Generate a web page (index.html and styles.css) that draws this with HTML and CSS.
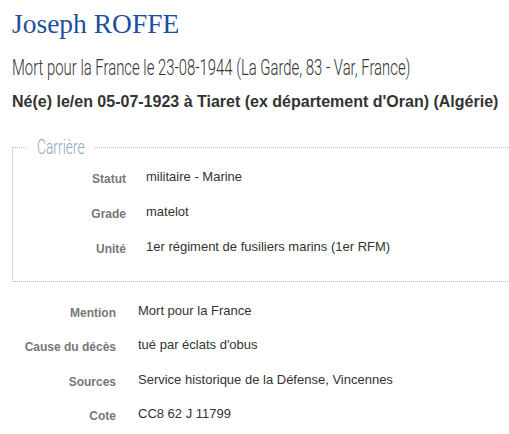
FILE: index.html
```html
<!DOCTYPE html>
<html lang="fr">
<head>
<meta charset="utf-8">
<link rel="stylesheet" href="styles.css">
</head>
<body>
<div class="page">
  <h1 class="name">Joseph ROFFE</h1>
  <p class="death"><span class="narrow death-text">Mort pour la France le 23-08-1944 (La Garde, 83 - Var, France)</span></p>
  <p class="birth">Né(e) le/en 05-07-1923 à Tiaret (ex département d'Oran) (Algérie)</p>
  <fieldset class="box">
    <legend class="legend"><span class="narrow legend-text">Carrière</span></legend>
    <dl class="rows inner">
      <div class="row"><dt>Statut</dt><dd>militaire - Marine</dd></div>
      <div class="row"><dt>Grade</dt><dd>matelot</dd></div>
      <div class="row"><dt>Unité</dt><dd>1er régiment de fusiliers marins (1er RFM)</dd></div>
    </dl>
  </fieldset>
  <dl class="rows outer">
    <div class="row"><dt>Mention</dt><dd>Mort pour la France</dd></div>
    <div class="row"><dt>Cause du décès</dt><dd>tué par éclats d'obus</dd></div>
    <div class="row"><dt>Sources</dt><dd>Service historique de la Défense, Vincennes</dd></div>
    <div class="row"><dt>Cote</dt><dd>CC8 62 J 11799</dd></div>
  </dl>
</div>
</body>
</html>
```

FILE: styles.css
```css
html, body { margin: 0; padding: 0; background: #fff; }
body { font-family: "Liberation Sans", Arial, sans-serif; color: #333; overflow: hidden; }
.page { padding: 0 0 0 12px; width: 560px; }
.name {
  font-family: "Liberation Serif", "DejaVu Serif", serif;
  font-weight: normal;
  font-size: 27.5px;
  color: #1d4f9e;
  margin: 0;
  padding-top: 9px;
  line-height: 30px;
}
.narrow {
  display: inline-block;
  font-family: Roboto, sans-serif;
  font-weight: 300;
  white-space: nowrap;
  transform-origin: 0 50%;
}
.death {
  margin: 17px 0 0;
  height: 24px;
  line-height: 24px;
  white-space: nowrap;
}
.death-text {
  font-size: 22px;
  color: #333;
  transform: scaleX(0.676);
}
.birth {
  font-size: 16px;
  font-weight: bold;
  color: #333;
  margin: 12px 0 0;
  line-height: 20px;
}
.box {
  margin: 25px 0 0;
  padding: 0 0 7px 0;
  border: 1px dotted #bbb;
}
.legend {
  margin-left: 14px;
  padding: 0 10px 0 10px;
  width: 48px;
  line-height: 20px;
  height: 20px;
  white-space: nowrap;
}
.legend-text {
  font-size: 20px;
  color: #8ea6bc;
  transform: scaleX(0.69);
}
.rows { margin: 0; }
.row { display: flex; align-items: baseline; height: 35px; }
.row dt { text-align: right; font-size: 12px; font-weight: bold; color: #777; line-height: 16px; position: relative; top: 2px; }
.row dd { margin: 0; font-size: 13px; color: #333; line-height: 16px; }
.inner { padding-top: 12px; }
.inner dt { width: 113px; }
.inner dd { margin-left: 20px; }
.outer { padding-top: 21px; }
.outer .row { height: 34.4px; }
.outer dt { width: 104px; }
.outer dd { margin-left: 22px; }
```
